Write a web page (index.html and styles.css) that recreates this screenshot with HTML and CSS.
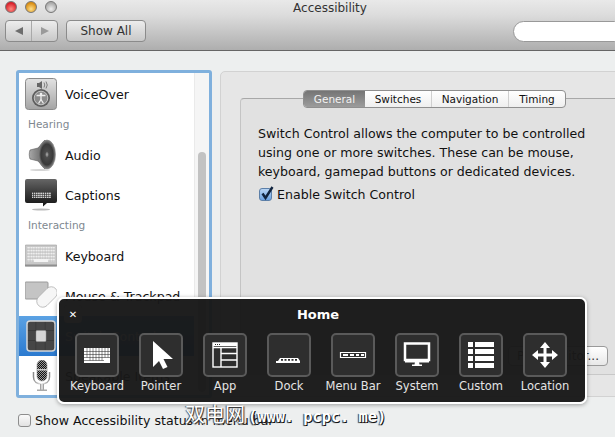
FILE: index.html
```html
<!DOCTYPE html>
<html lang="en">
<head>
<meta charset="utf-8">
<title>Accessibility</title>
<link rel="stylesheet" href="styles.css">
</head>
<body>
<div class="window">
  <header class="titlebar">
    <div class="title-row">
      <div class="lights"><span class="light red"></span><span class="light amber"></span><span class="light grey"></span></div>
      <div class="title">Accessibility</div>
    </div>
    <div class="tools">
      <div class="navgroup">
        <span class="navbtn"><svg width="10" height="10" viewBox="0 0 10 10"><path d="M9 1v8L1 5z" fill="#6d6d6d"/></svg></span>
        <span class="navbtn second"><svg width="10" height="10" viewBox="0 0 10 10"><path d="M1 1v8l8-4z" fill="#9a9a9a"/></svg></span>
      </div>
      <div class="showall">Show All</div>
      <div class="search"></div>
    </div>
  </header>

  <main class="content">
    <div class="columns">
      <aside class="sidebar">
        <div class="list">
          <div class="row">
            <svg class="ico" viewBox="0 0 32 32"><defs><linearGradient id="vo" x1="0" y1="0" x2="0" y2="1"><stop offset="0" stop-color="#e2e2e2"/><stop offset="1" stop-color="#a4a4a4"/></linearGradient></defs><rect x=".5" y=".5" width="31" height="31" rx="3" fill="url(#vo)" stroke="#8a8a8a"/><path d="M12 5h2l3-2v8l-3-2h-2z" fill="#666"/><path d="M19 4.500q1.500 2.500 0 5M21 3.500q2.500 3.500 0 7" fill="none" stroke="#666" stroke-width=".8"/><circle cx="16" cy="20" r="9" fill="#5d5d5d"/><circle cx="16" cy="20" r="6.800" fill="#8b8b8b" stroke="#d8d8d8" stroke-width=".8"/><circle cx="16" cy="16" r="1.300" fill="#eee"/><path d="M11.500 17.500h9M16 17.500v4M16 21.500l-2.500 4M16 21.500l2.500 4" stroke="#eee" stroke-width="1.300" fill="none"/></svg>
            <span>VoiceOver</span>
          </div>
          <div class="group">Hearing</div>
          <div class="row">
            <svg class="ico" viewBox="0 0 32 32"><defs><radialGradient id="cone" cx=".5" cy=".5" r=".55"><stop offset="0" stop-color="#b5b5b5"/><stop offset=".2" stop-color="#4c4c4c"/><stop offset=".65" stop-color="#3a3a3a"/><stop offset=".85" stop-color="#777"/><stop offset="1" stop-color="#a8a8a8"/></radialGradient><linearGradient id="back" x1="0" y1="0" x2="1" y2="0"><stop offset="0" stop-color="#a8a8a8"/><stop offset="1" stop-color="#5c5c5c"/></linearGradient></defs><path d="M5 11l8-2 7-8v29l-7-8-8-2c-1-3-1-6 0-9z" fill="url(#back)" stroke="#5a5a5a" stroke-width=".6"/><ellipse cx="22" cy="15.500" rx="8.500" ry="14.500" fill="url(#cone)" stroke="#777" stroke-width=".5"/><ellipse cx="15" cy="31" rx="10" ry="1" fill="#d4d4d4"/></svg>
            <span>Audio</span>
          </div>
          <div class="row">
            <svg class="ico" viewBox="0 0 32 32"><defs><linearGradient id="cap" x1="0" y1="0" x2="0" y2="1"><stop offset="0" stop-color="#666"/><stop offset=".5" stop-color="#3a3a3a"/><stop offset="1" stop-color="#141414"/></linearGradient><pattern id="capkeys" width="2.200" height="2" patternUnits="userSpaceOnUse"><rect width="2.200" height="2" fill="#333"/><rect width="1.600" height="1.400" fill="#d4d4d4"/></pattern></defs><path d="M2 0h28a2 2 0 0 1 2 2v20a2 2 0 0 1-2 2h-8l-4 3.500V24H2a2 2 0 0 1-2-2V2a2 2 0 0 1 2-2z" fill="url(#cap)"/><rect x="7" y="13" width="19" height="6" fill="url(#capkeys)"/><ellipse cx="16" cy="30.500" rx="9" ry="1" fill="#bbb"/></svg>
            <span>Captions</span>
          </div>
          <div class="group">Interacting</div>
          <div class="row">
            <svg class="ico" viewBox="0 0 32 32"><defs><pattern id="keys" width="2.500" height="3" patternUnits="userSpaceOnUse"><rect width="2.500" height="3" fill="#a9a9a9"/><rect x=".3" y=".4" width="2" height="2.300" fill="#f4f4f4"/></pattern></defs><rect y="5" width="32" height="21" rx="1" fill="#c8c8c8" stroke="#9c9c9c" stroke-width=".6"/><rect x="2" y="7" width="28" height="15" fill="url(#keys)"/><rect x="9" y="19" width="14" height="3" fill="#f4f4f4"/><rect y="24.500" width="32" height="2" fill="#8f8f8f"/></svg>
            <span>Keyboard</span>
          </div>
          <div class="row">
            <svg class="ico" viewBox="0 0 32 32"><rect y="2" width="23" height="17" rx="1" fill="#c4c4c4" stroke="#9a9a9a"/><rect x="16" y="5" width="12" height="24" rx="6" transform="rotate(45 22 17)" fill="#f6f6f6" stroke="#aaa" stroke-width=".7"/></svg>
            <span>Mouse &amp; Trackpad</span>
          </div>
          <div class="row selected">
            <svg class="ico" viewBox="0 0 32 32"><defs><pattern id="cell" x="2" y="1" width="9.300" height="10" patternUnits="userSpaceOnUse"><rect width="9.300" height="10" fill="#2e2e2e"/><rect width="8.800" height="9.500" fill="#464646"/></pattern></defs><rect x="2" y="1" width="28" height="30" rx="3" fill="url(#cell)" stroke="#d8d8d8" stroke-width="1.500"/><rect x="11" y="10.500" width="10" height="11" rx="1" fill="#d6d6d6" stroke="#999" stroke-width=".5"/></svg>
            <span>Switch Control</span>
          </div>
          <div class="row">
            <svg class="ico" viewBox="0 0 32 32"><defs><pattern id="mesh" width="2" height="2" patternUnits="userSpaceOnUse"><rect width="2" height="2" fill="#bbb"/><rect width="1.200" height="1.200" fill="#111"/><rect x="1" y="1" width="1" height="1" fill="#111"/></pattern><linearGradient id="steel" x1="0" y1="0" x2="1" y2="0"><stop offset="0" stop-color="#8a8a8a"/><stop offset=".5" stop-color="#eee"/><stop offset="1" stop-color="#8a8a8a"/></linearGradient></defs><rect x="12" y="0" width="10" height="21" rx="5" fill="url(#mesh)" stroke="#999" stroke-width=".6"/><rect x="11.500" y="9" width="11" height="1.500" fill="#ccc"/><path d="M8.500 12v5c0 5 4 7 8 7s8-2 8-7v-5" fill="none" stroke="url(#steel)" stroke-width="1.500"/><rect x="15" y="24" width="4" height="6" fill="url(#steel)"/><rect x="12" y="29.500" width="10" height="1.500" fill="#aaa"/></svg>
            <span>Speakable Items</span>
          </div>
        </div>
        <div class="scroller"><div class="thumb"></div></div>
      </aside>

      <section class="panel">
        <div class="inner">
          <div class="tabs">
            <span class="tab active t1">General</span>
            <span class="tab t2">Switches</span>
            <span class="tab t3">Navigation</span>
            <span class="tab t4">Timing</span>
          </div>
          <p class="desc">Switch Control allows the computer to be controlled<br>using one or more switches. These can be mouse,<br>keyboard, gamepad buttons or dedicated devices.</p>
          <label class="check-line">
            <span class="check on"><svg width="16" height="16" viewBox="0 0 16 16"><path d="M3.500 7.500l3 4.500L13.500 1" fill="none" stroke="#11243f" stroke-width="2.400"/></svg></span>
            <span>Enable Switch Control</span>
          </label>
          <div class="inner-foot"><span class="editor">Panel Editor...</span></div>
        </div>
      </section>
    </div>
    <label class="check-line bottom">
      <span class="check"></span>
      <span>Show Accessibility status in menu bar</span>
    </label>
  </main>
</div>

<div class="hud">
  <div class="hud-head">
    <span class="close">✕</span>
    <span class="hud-title">Home</span>
  </div>
  <div class="tiles">
    <div class="item"><div class="tile"><svg width="28" height="28" viewBox="0 0 28 28"><path fill="#fff" d="M1 7h26v15H1z"/><path stroke="#2e2e2e" stroke-width=".55" d="M1 10.500h26M1 13.500h26M1 16.500h26M1 19.500h20M4 7v9.500M7 7v12.500M10 7v12.500M13 7v12.500M16 7v12.500M19 7v12.500M22 7v9.500M25 7v9.500"/></svg></div><span>Keyboard</span></div>
    <div class="item"><div class="tile"><svg width="30" height="30" viewBox="0 0 30 30"><path fill="#fff" d="M7 1v26l6-6 4 8 4.500-2-4-8H27z"/></svg></div><span>Pointer</span></div>
    <div class="item"><div class="tile"><svg width="28" height="28" viewBox="0 0 28 28"><rect x="2" y="2" width="24" height="24" fill="none" stroke="#fff" stroke-width="1.400"/><path fill="#fff" d="M2 2h24v3H2z"/><path stroke="#2e2e2e" stroke-dasharray="1 1" d="M4 3.500h5"/><path stroke="#fff" stroke-width="1.400" fill="none" d="M2 6.500h24M10 6.500V26M10 12.500h16M10 19h16"/></svg></div><span>App</span></div>
    <div class="item"><div class="tile"><svg width="28" height="28" viewBox="0 0 28 28"><path fill="#fff" d="M3 20l2-3h18l2 3v2H1v-2z"/><path stroke="#2e2e2e" stroke-width="1.800" stroke-dasharray="2 1.500" d="M6 18.800h16"/></svg></div><span>Dock</span></div>
    <div class="item"><div class="tile"><svg width="28" height="28" viewBox="0 0 28 28"><path fill="none" stroke="#fff" stroke-width="1.200" d="M1.500 11.500h25v5h-25z"/><path stroke="#fff" stroke-width="2" d="M4 14h5M11 14h4M17 14h3M22 14h3"/></svg></div><span>Menu Bar</span></div>
    <div class="item"><div class="tile"><svg width="28" height="28" viewBox="0 0 28 28"><path fill="none" stroke="#fff" stroke-width="2.500" d="M2 2.500h24v16.500H2z"/><path fill="#fff" d="M2 19h24v2.500H2zM12 21h4l.5 2.500H19V25H9v-1.500h2.500z"/></svg></div><span>System</span></div>
    <div class="item"><div class="tile"><svg width="28" height="28" viewBox="0 0 28 28"><path fill="#fff" d="M1 1h5v5H1zM8 1h19v5H8zM1 8h5v5H1zM8 8h19v5H8zM1 15h5v5H1zM8 15h19v5H8zM1 22h5v5H1zM8 22h19v5H8z"/></svg></div><span>Custom</span></div>
    <div class="item"><div class="tile"><svg width="28" height="28" viewBox="0 0 28 28"><path fill="#fff" d="M14 1l5 6h-3.500v5.500H21V9l6 5-6 5v-3.500h-5.500V21H19l-5 6-5-6h3.500v-5.500H7V19l-6-5 6-5v3.500h5.500V7H9z"/></svg></div><span>Location</span></div>
  </div>
</div>

<div class="watermark">双电网<span class="wm-latin">(www. pcpc. me)</span></div>
</body>
</html>
```

FILE: styles.css
```css
html, body {
  margin: 0;
  padding: 0;
  height: 100%;
  overflow: hidden;
}

body {
  font-family: "DejaVu Sans", "Liberation Sans", sans-serif;
  font-size: 12px;
  color: #111;
  background: #edefef;
  position: relative;
  width: 615px;
  height: 437px;
}

.window {
  display: flex;
  flex-direction: column;
  height: 437px;
}

.titlebar {
  height: 50px;
  box-sizing: content-box;
  border-bottom: 1px solid #666;
  background: linear-gradient(#e9e9e9, #dcdcdc 30%, #aeaeae);
  display: flex;
  flex-direction: column;
}

.title-row {
  height: 19px;
  position: relative;
  display: flex;
  align-items: center;
  justify-content: center;
  padding-left: 45px;
}

.title {
  font-size: 12px;
  color: #333;
  margin-top: -4px;
}

.lights {
  position: absolute;
  left: 5px;
  top: 1px;
  display: flex;
  gap: 8px;
}

.light {
  width: 12px;
  height: 12px;
  box-sizing: border-box;
  border-radius: 50%;
  border: 0.5px solid #777;
}

.red { background: radial-gradient(circle at 50% 70%, #ff8a80, #d8202a 70%); }
.amber { background: radial-gradient(circle at 50% 70%, #ffe08a, #d98d13 70%); }
.grey { background: radial-gradient(circle at 50% 70%, #eee, #aaa 70%); }

.tools {
  display: flex;
  align-items: center;
  margin-top: 1px;
  padding-left: 5px;
  height: 22px;
}

.navgroup {
  display: flex;
  width: 53px;
  height: 22px;
  border: 1px solid #8b8b8b;
  border-radius: 4px;
  background: linear-gradient(#ededed, #c8c8c8);
  box-sizing: border-box;
}

.navbtn {
  flex: 1;
  display: flex;
  align-items: center;
  justify-content: center;
}

.navbtn.second {
  border-left: 1px solid #a9a9a9;
}

.showall {
  margin-left: 8px;
  width: 80px;
  height: 22px;
  box-sizing: border-box;
  border: 1px solid #8b8b8b;
  border-radius: 4px;
  background: linear-gradient(#ededed, #c8c8c8);
  display: flex;
  align-items: center;
  justify-content: center;
  font-size: 12px;
  color: #333;
}

.search {
  margin-left: auto;
  margin-right: -10px;
  width: 112px;
  height: 21px;
  background: #fff;
  border: 1px solid #999;
  border-radius: 11px;
  box-sizing: border-box;
}

.content {
  flex: 1;
  padding: 19px 0 0 16px;
  display: flex;
  flex-direction: column;
  min-height: 0;
}

.columns {
  display: flex;
  height: 328px;
  gap: 8px;
}

.sidebar {
  width: 196px;
  height: 328px;
  box-sizing: border-box;
  border: 3px solid #7fb0dd;
  border-radius: 3px;
  background: #fff;
  display: flex;
  overflow: hidden;
  flex-shrink: 0;
}

.list {
  flex: 1;
  padding-top: 1px;
  min-width: 0;
}

.row {
  height: 40px;
  display: flex;
  align-items: center;
  gap: 8px;
  padding-left: 6px;
  font-size: 12.600px;
  white-space: nowrap;
}

.row.selected {
  background: linear-gradient(#5ba2e4, #2b7ad0);
  color: #fff;
}

.ico {
  width: 32px;
  height: 32px;
  flex-shrink: 0;
}

.group {
  height: 21px;
  line-height: 21px;
  padding-left: 9px;
  font-size: 10.500px;
  color: #808890;
}

.scroller {
  width: 15px;
  background: #f5f5f5;
  border-left: 1px solid #eaeaea;
  box-sizing: border-box;
  padding: 79px 3px 0;
  flex-shrink: 0;
}

.thumb {
  height: 240px;
  border-radius: 4px;
  background: #c2c2c2;
}

.panel {
  flex: 1;
  margin-right: -30px;
  margin-top: 1px;
  height: 326px;
  box-sizing: border-box;
  border: 1px solid #d2d2d2;
  border-radius: 5px;
  background: #e6e6e6;
  padding: 26px 0 0 19px;
}

.inner {
  height: 277px;
  box-sizing: border-box;
  border-top: 1px solid #a8a8a8;
  border-left: 1px solid #c4c4c4;
  border-bottom: 1px solid #c8c8c8;
  border-radius: 4px 0 0 4px;
  background: #e1e1e1;
  padding-left: 17px;
  display: flex;
  flex-direction: column;
}

.tabs {
  align-self: flex-start;
  margin: -9px 0 0 45px;
  display: flex;
  height: 18px;
  border: 1px solid #8f8f8f;
  border-radius: 4px;
  background: linear-gradient(#fff, #efefef);
  box-sizing: border-box;
  overflow: hidden;
  font-size: 10.500px;
}

.tab {
  display: flex;
  align-items: center;
  justify-content: center;
  box-sizing: border-box;
  color: #111;
}

.tab + .tab { border-left: 1px solid #d0d0d0; }

.tab.active {
  background: linear-gradient(#757575, #9c9c9c);
  color: #f2f2f2;
}

.tab.active + .tab { border-left: 0; }

.t1 { width: 61px; }
.t2 { width: 66px; }
.t3 { width: 77px; }
.t4 { width: 57px; }

.desc {
  margin: 16px 0 0;
  font-size: 12.600px;
  line-height: 19px;
  white-space: nowrap;
}

.check-line {
  display: flex;
  align-items: center;
  gap: 4px;
  font-size: 12.600px;
  white-space: nowrap;
}

.inner .check-line {
  margin-top: 6px;
  padding-left: 1px;
  gap: 5px;
}

.check {
  width: 13px;
  height: 13px;
  box-sizing: border-box;
  border: 1px solid #8d8d8d;
  border-radius: 3px;
  background: linear-gradient(#fafafa, #e2e2e2);
  position: relative;
  flex-shrink: 0;
}

.check.on {
  background: linear-gradient(#b8d4f4, #6ba2e2);
  border-color: #5c7fa8;
}

.check.on svg {
  position: absolute;
  left: -1px;
  top: -3px;
}

.inner-foot {
  margin-top: 144px;
  padding-right: 36px;
  display: flex;
  justify-content: flex-end;
}

.editor {
  height: 20px;
  padding: 0 8px;
  display: flex;
  align-items: center;
  box-sizing: border-box;
  border: 1px solid #9a9a9a;
  border-radius: 4px;
  background: linear-gradient(#fff, #e8e8e8);
  font-size: 12px;
  color: #333;
}

.bottom {
  margin: 15px 0 0 2px;
}

.hud {
  position: absolute;
  left: 57px;
  top: 297px;
  width: 530px;
  height: 107px;
  box-sizing: border-box;
  border: 2px solid #fff;
  border-radius: 7px;
  background: rgba(24, 24, 24, 0.97);
  box-shadow: 0 1px 4px rgba(0, 0, 0, 0.35);
  color: #fff;
}

.hud-head {
  height: 34px;
  position: relative;
  display: flex;
  align-items: center;
  justify-content: center;
  padding-right: 8px;
}

.hud-title {
  font-size: 13px;
  font-weight: bold;
  margin-top: -3px;
}

.close {
  position: absolute;
  left: 5px;
  top: 6px;
  width: 18px;
  height: 18px;
  display: flex;
  align-items: center;
  justify-content: center;
  font-size: 10px;
  font-weight: bold;
  background: #1f1f1f;
  border-radius: 3px;
}

.tiles {
  display: flex;
  padding-left: 6px;
}

.item {
  width: 64px;
  display: flex;
  flex-direction: column;
  align-items: center;
  color: #e4e4e4;
  font-size: 11.500px;
  white-space: nowrap;
}

.tile {
  width: 44px;
  height: 44px;
  box-sizing: border-box;
  border: 2px solid #5a5a5a;
  border-radius: 5px;
  background: #2e2e2e;
  display: flex;
  align-items: center;
  justify-content: center;
  margin-bottom: 2px;
}

.watermark {
  position: absolute;
  left: 185px;
  top: 399px;
  font-family: "Noto Sans CJK SC", "DejaVu Sans", sans-serif;
  font-size: 20px;
  color: #fff;
  white-space: nowrap;
  text-shadow: 1px 1px 1px #222, -1px 0 1px #555;
}

.wm-latin {
  font-family: "DejaVu Sans Mono", monospace;
  font-size: 15.300px;
  font-weight: bold;
  margin-left: 3px;
  text-shadow: 1px 1px 0 #111, -1px 1px 1px #333;
}
```
